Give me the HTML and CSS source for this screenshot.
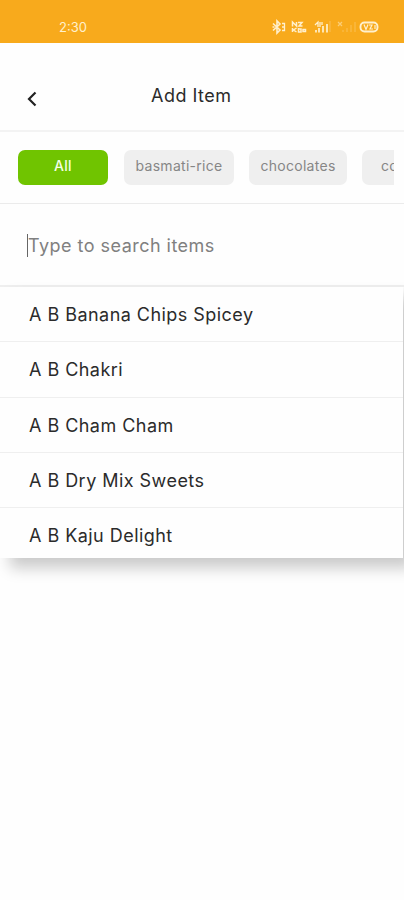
FILE: index.html
```
<!DOCTYPE html>
<html lang="en">

<head>
  <meta charset="utf-8">
  <title>Add Item</title>
  <link rel="stylesheet" href="styles.css">
</head>

<body>
  <div class="status-bar">
    <span class="time">2:30</span>
    <svg class="status-icons" width="110" height="16" viewBox="0 0 110 16" fill="none" stroke="#fff0cd" stroke-width="1.3">
      <!-- bluetooth -->
      <path d="M3 4.500l7 6.500-3 3V2l3 3-7 6.500M2.500 8h2" stroke-width="1.600" />
      <path d="M12 4.500h2.500v7H12M12 8h2.500" />
      <!-- network speed -->
      <path d="M22.500 7.500V3l4 4V3M28 3.500h4l-3 3.500h3.500M22.500 9v4M26.500 9l-3 2 3 2M28.500 9v4h2.500v-3h-2M33 10.500h2.500v2H33z" stroke-width="1.500" />
      <!-- signal -->
      <path d="M45 6l3-3v5M50 3v5M52 3v3" />
      <path d="M46 11v2.500M49 9v4.500M53 7v6.500M57 5v8.500" stroke-width="1.700" />
      <path d="M60 2v11" opacity=".25" />
      <path d="M68 3l4 4M72 3l-4 4" opacity=".5" />
      <path d="M73 11v2M77 9v4M81 6v7M85 3v10" opacity=".25" />
      <!-- battery -->
      <rect x="90.500" y="3.500" width="17" height="9" rx="4" stroke-width="1.900" />
      <path d="M94 5.500l2 5 2-5M99 6h3l-2 4h3M105 6v4" stroke-width="1.200" />
    </svg>
  </div>

  <div class="header">
    <svg class="back" width="12" height="18" viewBox="0 0 12 18">
      <path d="M9.500 2.500L3 9l6.500 6.500" fill="none" stroke="#222" stroke-width="2.200" />
    </svg>
    <div class="title">Add Item</div>
  </div>

  <div class="categories">
    <div class="chips">
      <div class="chip chip-all active">All</div>
      <div class="chip chip-rice">basmati-rice</div>
      <div class="chip chip-choc">chocolates</div>
      <div class="chip chip-last">co</div>
    </div>
  </div>

  <div class="search"><span class="cursor"></span><span class="placeholder">Type to search items</span></div>
  <div class="results">
    <div class="item">A B Banana Chips Spicey</div>
    <div class="item">A B Chakri</div>
    <div class="item">A B Cham Cham</div>
    <div class="item">A B Dry Mix Sweets</div>
    <div class="item">A B Kaju Delight</div>
  </div>
</body>

</html>
```

FILE: styles.css
```
* {
  box-sizing: border-box;
}

body {
  margin: 0;
  height: 900px;
  overflow: hidden;
  background: #fefefe;
  font-family: Inter, Roboto, sans-serif;
  color: #2b2b2b;
}

.status-bar {
  height: 43px;
  background: #f8aa1c;
  display: flex;
  justify-content: space-between;
  align-items: center;
  padding: 10px 24px 0 59px;
}

.time {
  font-size: 13px;
  color: #fff0cd;
}

.header {
  height: 89px;
  border-bottom: 2px solid #f3f3f3;
  display: flex;
  align-items: center;
  padding: 18px 0 0 26px;
}

.back {
  margin-top: 6px;
}

.title {
  margin-left: 113px;
  font-size: 18px;
  letter-spacing: 0.5px;
}

.categories {
  height: 72px;
  padding: 18px 10px 0 18px;
  border-bottom: 1px solid #ebebeb;
}

.chips {
  display: flex;
  gap: 15px;
  overflow: hidden;
}

.chip {
  flex: none;
  height: 35px;
  line-height: 32px;
  border-radius: 7px;
  background: #efefef;
  color: #868686;
  font-size: 14px;
  letter-spacing: 0.28px;
  text-align: center;
}

.chip-all {
  width: 90px;
  margin-right: 1px;
}

.chip-rice {
  width: 110px;
}

.chip-choc {
  width: 98px;
}

.chip-last {
  width: 60px;
  padding-left: 19px;
  text-align: left;
}

.active {
  background: #70c400;
  color: #f4ffe5;
  font-weight: 500;
}

.search {
  height: 83px;
  padding: 2px 0 0 27px;
  border-bottom: 2px solid #efefef;
  display: flex;
  align-items: center;
}

.cursor {
  width: 1px;
  height: 23px;
  background: #666;
}

.placeholder {
  font-size: 18px;
  letter-spacing: 0.47px;
  color: #808080;
}

.results {
  width: 403px;
  background: #fefefe;
  box-shadow: 10px 10px 14px #cacaca;
}

.item {
  height: 55.25px;
  padding-left: 29px;
  line-height: 55px;
  border-bottom: 1px solid #efefef;
  font-size: 18px;
  letter-spacing: 0.46px;
}

.item:last-child {
  height: 50px;
  border-bottom: none;
}
```
